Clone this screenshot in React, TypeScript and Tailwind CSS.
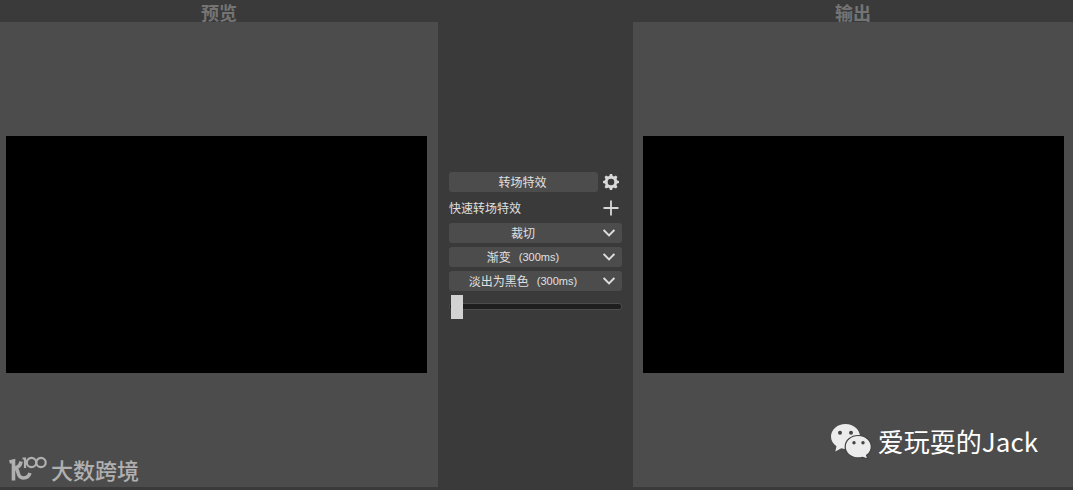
import React from "react";

function GearIcon() {
  return (
    <svg viewBox="0 0 16 16" className="size-4" aria-hidden="true">
      <g fill="#d8d8d8">
        {[0, 45, 90, 135].map((angle) => (
          <path key={angle} d="M6.200 2.500 6.900 0h2.200l.7 2.500v11L9.100 16H6.900l-.7-2.500z" transform={`rotate(${angle} 8 8)`} />
        ))}
        <circle cx="8" cy="8" r="6.200" />
      </g>
      <circle cx="8" cy="8" r="3.300" fill="#3a3a3a" />
    </svg>
  );
}

function PlusIcon() {
  return (
    <svg viewBox="0 0 16 16" className="size-4" aria-hidden="true">
      <path d="M8 .5v15M.5 8h15" fill="none" stroke="#d8d8d8" strokeWidth="1.8" />
    </svg>
  );
}

function ChevronIcon() {
  return (
    <svg viewBox="0 0 12 8" className="h-2 w-3 shrink-0" aria-hidden="true">
      <path d="M.6 1 6 6.400 11.400 1" fill="none" stroke="#dedede" strokeWidth="2" />
    </svg>
  );
}

function WeChatIcon() {
  return (
    <svg viewBox="0 0 42 36" className="h-9 w-[42px]" aria-hidden="true">
      <path
        fill="#ececec"
        d="M15.500 1C7.500 1 1 6.500 1 13.600c0 4 2.100 7.400 5.500 9.700L5.300 28.500l6-3.200c1.400.4 2.700.6 4.200.6 8 0 14.500-5.300 14.500-12.300S23.500 1 15.500 1z"
      />
      <path
        fill="#ececec"
        stroke="#404040"
        strokeWidth="1.2"
        d="M28.200 12.500c-7.300 0-13 4.900-13 11.200s5.700 11.200 13 11.200c1.500 0 3-.2 4.300-.6l5.300 1.700-1.200-3.700c3-2 4.700-5.100 4.700-8.600 0-6.300-5.800-11.200-13.100-11.200z"
      />
      <g fill="#444444">
        <circle cx="10" cy="9.800" r="2" />
        <circle cx="21" cy="9.800" r="2" />
        <circle cx="24" cy="19.800" r="1.700" />
        <circle cx="33" cy="19.800" r="1.700" />
      </g>
    </svg>
  );
}

function HundredLogo() {
  return (
    <svg viewBox="0 0 40 28" className="h-7 w-10" aria-hidden="true">
      <g fill="none" stroke="#b0b0b0">
        <path d="M1.500 7 5.500 6V25.500" strokeWidth="3.600" />
        <path d="M13 6.500c-.5 4-3.500 6-6 6.500 2 .5 2.500 2 3 4.500.7 3.500 2.500 5.500 5.500 5.500s5.500-2 6.500-5" strokeWidth="3.600" />
        <path d="M14.500 3.500h2.500V13" strokeWidth="2.200" />
        <circle cx="23.500" cy="7.500" r="4.700" strokeWidth="2.200" />
        <circle cx="33" cy="7.500" r="4.700" strokeWidth="2.200" />
      </g>
    </svg>
  );
}

function Monitor({ title, padding }: { title: string; padding: string }) {
  return (
    <section className="flex flex-col">
      <h2 className="h-[22px] text-center text-lg leading-6 font-bold text-[#747474]">{title}</h2>
      <div className={`flex flex-1 items-center bg-[#4c4c4c] ${padding}`}>
        <div className="aspect-video w-full bg-black" />
      </div>
    </section>
  );
}

function QuickTransition({ name, duration }: { name: string; duration?: string }) {
  return (
    <button
      type="button"
      aria-haspopup="menu"
      className="flex h-5 w-full items-center rounded-[3px] bg-[#4c4c4c] pr-[7px] hover:bg-[#585858]"
    >
      <span className="flex flex-1 items-center justify-center pr-1.5">
        {name}
        {duration && <span className="ml-2 font-['Liberation_Sans',sans-serif] text-[11px]">({duration})</span>}
      </span>
      <ChevronIcon />
    </button>
  );
}

export default function App() {
  return (
    <main className="relative grid min-h-screen grid-cols-[438fr_195px_440fr] bg-[#3a3a3a] pb-[3px] font-['Noto_Sans_CJK_SC',sans-serif]">
      <Monitor title="预览" padding="pl-1.5 pr-[11px]" />

      <section className="flex flex-col justify-center gap-1 px-[11px] pt-[3px] text-xs leading-5 text-[#e0e0e0]">
        <div className="flex items-center justify-between">
          <button type="button" className="h-5 w-[149px] rounded-[3px] bg-[#4c4c4c] pr-0.5 hover:bg-[#585858]">
            转场特效
          </button>
          <button type="button" aria-label="转场设置" className="mr-[3px]">
            <GearIcon />
          </button>
        </div>
        <div className="flex h-[23px] items-center justify-between pt-0.5">
          <span>快速转场特效</span>
          <button type="button" aria-label="添加快速转场" className="mr-[3px]">
            <PlusIcon />
          </button>
        </div>
        <QuickTransition name="裁切" />
        <QuickTransition name="渐变" duration="300ms" />
        <QuickTransition name="淡出为黑色" duration="300ms" />
        <input
          type="range"
          min={0}
          max={100}
          defaultValue={0}
          aria-label="转场进度"
          className="h-6 w-full appearance-none bg-transparent [&::-webkit-slider-runnable-track]:h-[7px] [&::-webkit-slider-runnable-track]:rounded-[3px] [&::-webkit-slider-runnable-track]:border [&::-webkit-slider-runnable-track]:border-[#4c4c4c] [&::-webkit-slider-runnable-track]:bg-[#1e1e1e] [&::-webkit-slider-thumb]:-mt-[9px] [&::-webkit-slider-thumb]:ml-px [&::-webkit-slider-thumb]:h-6 [&::-webkit-slider-thumb]:w-3 [&::-webkit-slider-thumb]:appearance-none [&::-webkit-slider-thumb]:bg-[#d2d2d2]"
        />
      </section>

      <Monitor title="输出" padding="pl-2.5 pr-[9px]" />

      <div className="absolute bottom-[5px] left-2 flex items-center gap-[3px] text-[22px] leading-8 font-medium text-[#b0b0b0]">
        <HundredLogo />
        <span>大数跨境</span>
      </div>
      <div className="absolute right-[35px] bottom-[31px] flex items-center gap-1.5 text-[26px] leading-9 text-white">
        <WeChatIcon />
        <span>爱玩耍的Jack</span>
      </div>
    </main>
  );
}
